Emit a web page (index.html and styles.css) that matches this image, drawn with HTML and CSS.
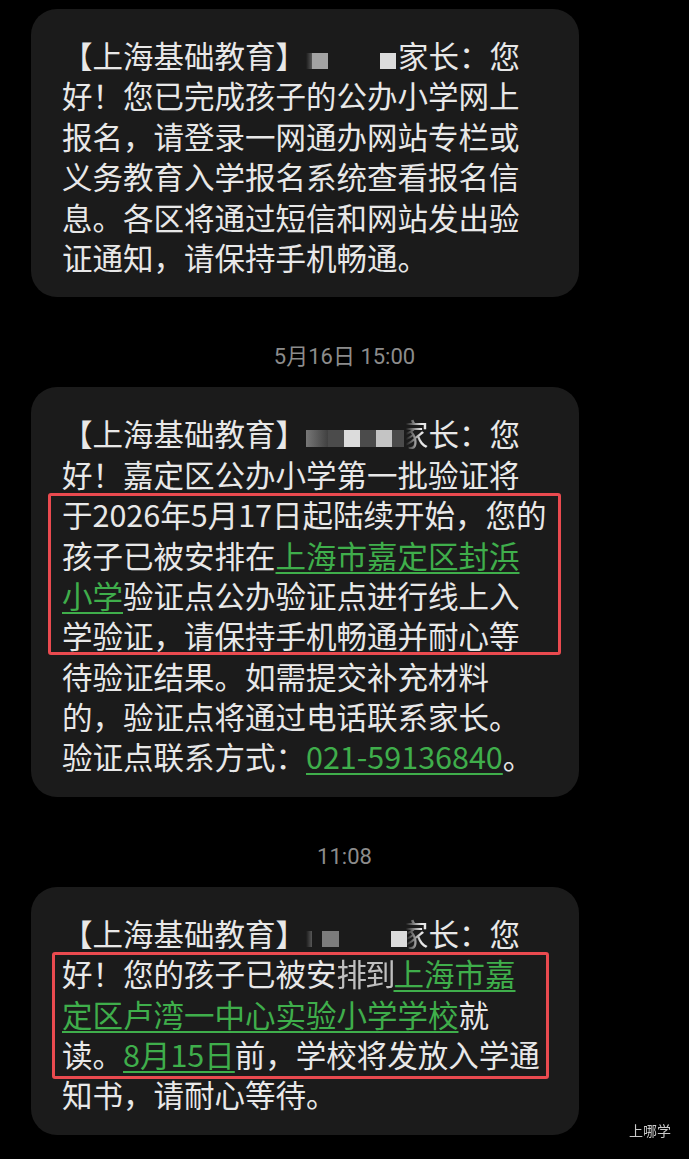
FILE: index.html
```html
<!DOCTYPE html>
<html lang="zh-CN">
<head>
  <meta charset="UTF-8">
  <meta name="viewport" content="width=device-width, initial-scale=1.0">
  <title>短信</title>
  <link rel="stylesheet" href="styles.css">
</head>
<body>
  <div class="thread">

    <!-- 第一条 -->
    <div class="bubble">
      <div class="line">【上海基础教育】<span class="mask"><i class="ghost"></i><i class="px mid"></i><i class="gap"></i><i class="px light"></i></span>家长：您</div>
      <div class="line">好！您已完成孩子的公办小学网上</div>
      <div class="line">报名，请登录一网通办网站专栏或</div>
      <div class="line">义务教育入学报名系统查看报名信</div>
      <div class="line">息。各区将通过短信和网站发出验</div>
      <div class="line">证通知，请保持手机畅通。</div>
    </div>

    <div class="time">5月16日 15:00</div>

    <!-- 第二条 -->
    <div class="bubble">
      <div class="line">【上海基础教育】<span class="mask mask-b"><i class="ghost wide"></i><i class="px dark"></i><i class="px light"></i><i class="px dark"></i><i class="px soft"></i><i class="px dark narrow"></i></span><span class="fade">家</span>长：您</div>
      <div class="line">好！嘉定区公办小学第一批验证将</div>
      <div class="mark mark-b">
        <div class="line">于2026年5月17日起陆续开始，您的</div>
        <div class="line">孩子已被安排在<a class="link">上海市嘉定区封浜</a></div>
        <div class="line"><a class="link">小学</a>验证点公办验证点进行线上入</div>
        <div class="line">学验证，请保持手机畅通并耐心等</div>
      </div>
      <div class="line">待验证结果。如需提交补充材料</div>
      <div class="line">的，验证点将通过电话联系家长。</div>
      <div class="line">验证点联系方式：<a class="link">021-59136840</a>。</div>
    </div>

    <div class="time">11:08</div>

    <!-- 第三条 -->
    <div class="bubble">
      <div class="line">【上海基础教育】<span class="mask"><i class="ghost"></i><i class="gap small"></i><i class="px grey"></i><i class="gap"></i><i class="px light"></i></span><span class="fade">家</span>长：您</div>
      <div class="mark mark-c">
        <div class="line">好！您的孩子已被安<span class="smear">排到</span><a class="link">上海市嘉</a></div>
        <div class="line"><a class="link">定区卢湾一中心实验小学学校</a>就</div>
        <div class="line">读。<a class="link">8月15日</a>前，学校将发放入学通</div>
      </div>
      <div class="line">知书，请耐心等待。</div>
    </div>

  </div>

  <div class="watermark">上哪学</div>
</body>
</html>
```

FILE: styles.css
```css
body {
  margin: 0;
  background-color: #000;
  font-family: "Noto Sans CJK SC", "Noto Sans", sans-serif;
  color: #e8e8e8;
  height: 1159px;
  overflow: hidden;
}
.thread {
  padding: 9px 0 0 31px;
}
.bubble {
  width: 548px;
  box-sizing: border-box;
  padding: 26px 31px 20px 31px;
  background-color: #1b1b1b;
  border-radius: 26px;
  font-size: 30.5px;
}
.line {
  height: 40.4px;
  line-height: 40.4px;
  white-space: nowrap;
}
.time {
  width: 689px;
  margin: 45px 0 15px -31px;
  height: 30px;
  line-height: 30px;
  text-align: center;
  font-family: Roboto, "Noto Sans CJK SC", sans-serif;
  font-size: 22px;
  color: #8c8c8c;
}

/* 链接 */
.link {
  color: #3fae4b;
  text-decoration: underline;
  text-decoration-thickness: 2px;
  text-underline-offset: 4px;
}

/* 打码 */
.mask {
  display: inline-flex;
  align-items: center;
  width: 92px;
  height: 20px;
  vertical-align: -1px;
}
.mask i {
  display: block;
  flex: none;
  height: 16px;
}
.mask .ghost {
  width: 6px;
  background: linear-gradient(to right, rgba(200,200,200,0), rgba(200,200,200,0.35));
}
.mask .ghost.wide {
  width: 22px;
  background: linear-gradient(to right, rgba(210,210,210,0.5), rgba(120,120,120,0.4));
}
.mask .gap {
  width: 52px;
}
.mask .gap.small {
  width: 10px;
}
.mask .px {
  width: 16px;
}
.mask .mid { background-color: #a3a3a3; }
.mask .grey { background-color: #7c7c7c; width: 17px; }
.mask .light { background-color: #dcdcdc; }
.mask .soft { background-color: #c4c4c4; }
.mask .dark { background-color: #4b4b4b; }
.mask .narrow { width: 12px; }
.mask-b i { height: 17px; }
.fade {
  -webkit-mask-image: linear-gradient(to right, transparent 25%, #000 75%);
  mask-image: linear-gradient(to right, transparent 25%, #000 75%);
}
.smear {
  opacity: 0.8;
  letter-spacing: -2px;
}

/* 红框标注 */
.mark {
  position: relative;
}
.mark::after {
  content: "";
  position: absolute;
  border: 3px solid #ea4a4f;
  border-radius: 3px;
}
.mark-b::after {
  left: -14px;
  right: -13px;
  top: -1px;
  bottom: 1px;
}
.mark-c::after {
  left: -10px;
  right: -1px;
  top: -1px;
  bottom: -5px;
}

.watermark {
  position: fixed;
  right: 18px;
  bottom: 20px;
  font-size: 14px;
  line-height: 18px;
  color: #c9c9c9;
}
```
